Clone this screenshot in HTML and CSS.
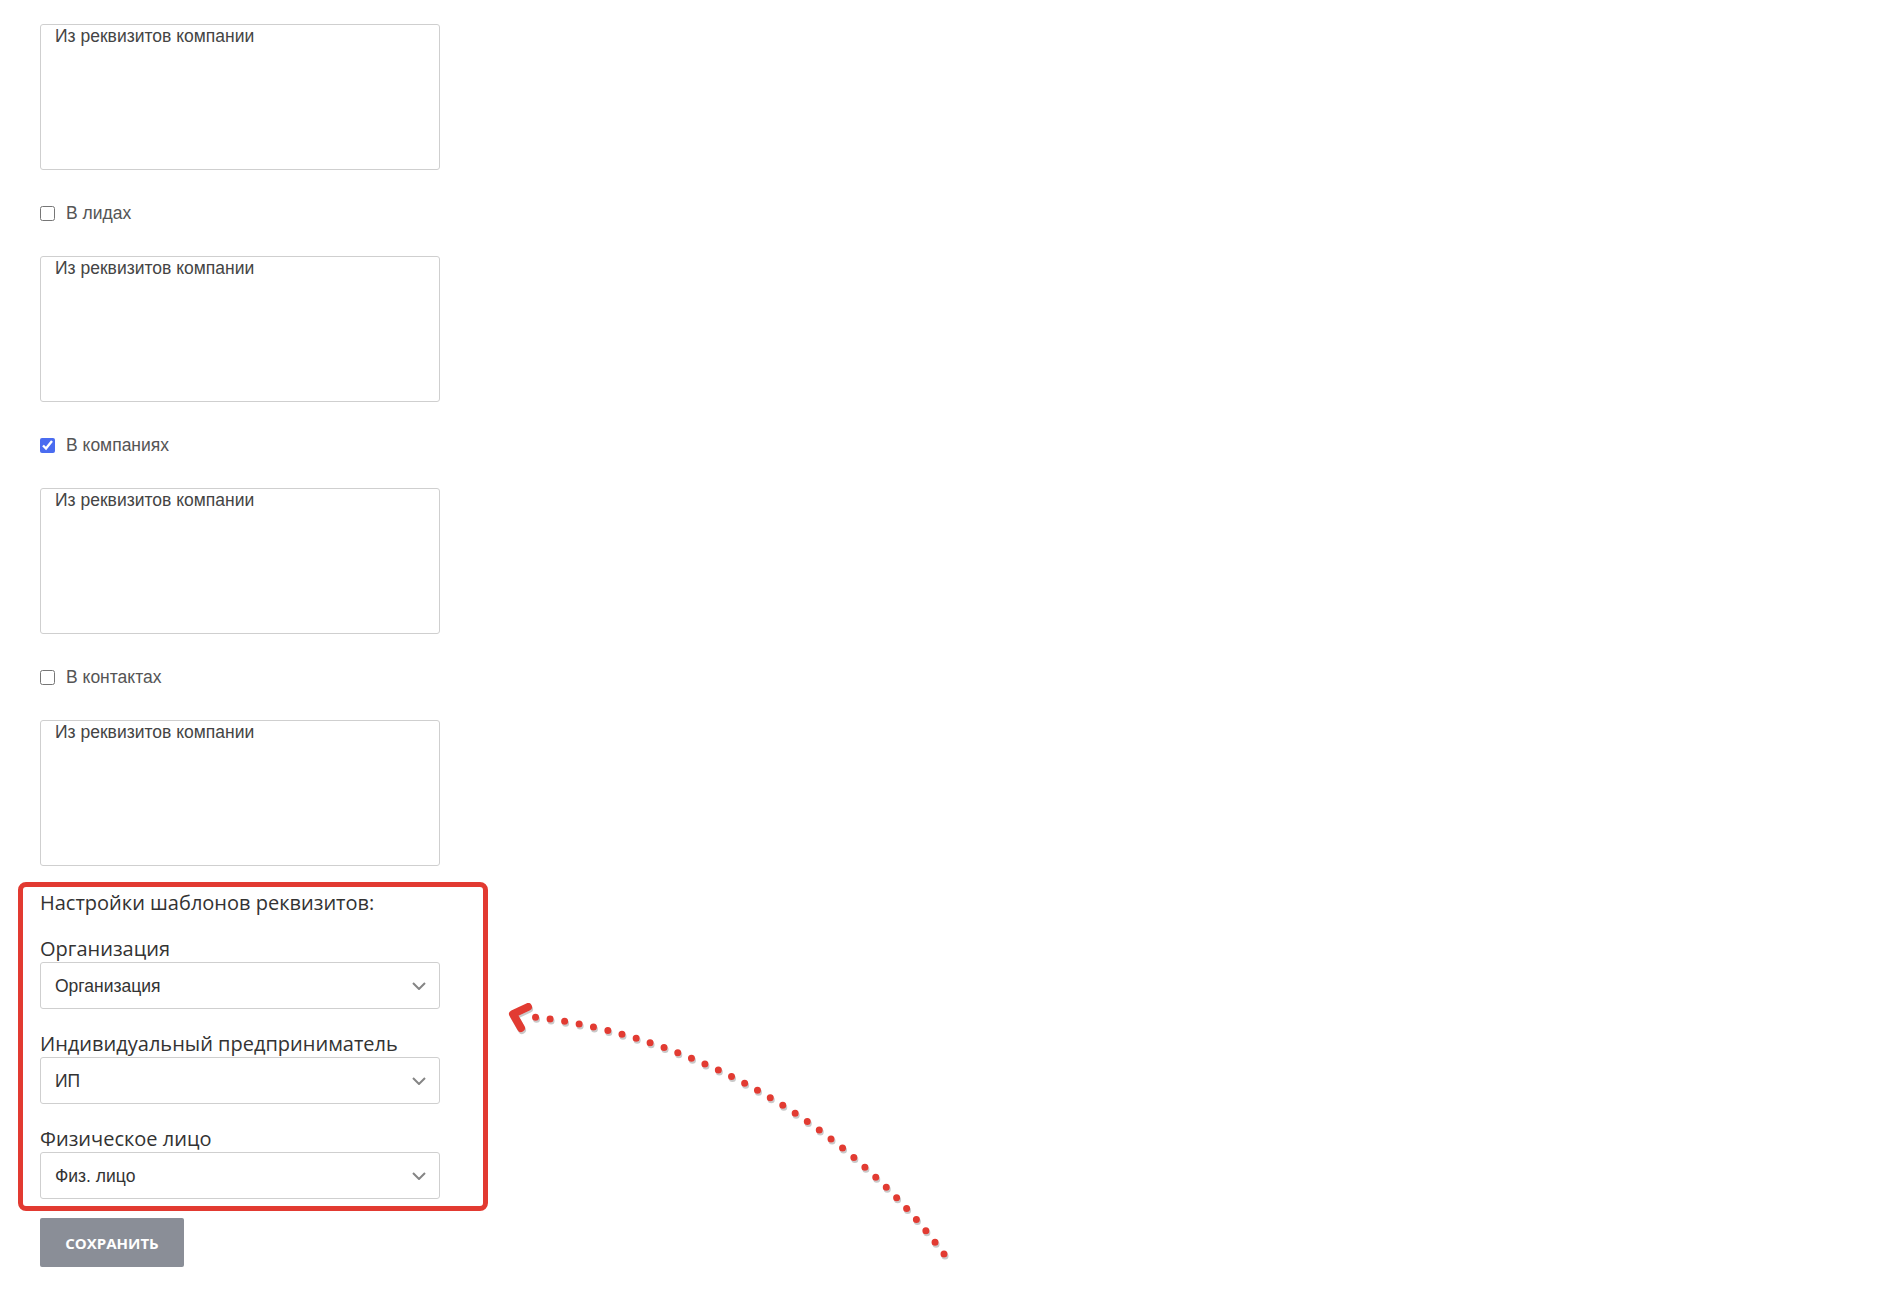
FILE: index.html
```html
<!DOCTYPE html>
<html lang="ru">
<head>
  <meta charset="UTF-8">
  <title>Реквизиты</title>
  <link rel="stylesheet" href="styles.css">
</head>
<body>

  <div class="settings">
    <textarea class="note">Из реквизитов компании</textarea>

    <label class="check-row">
      <input type="checkbox">
      <span>В лидах</span>
    </label>
    <textarea class="note">Из реквизитов компании</textarea>

    <label class="check-row">
      <input type="checkbox" checked>
      <span>В компаниях</span>
    </label>
    <textarea class="note">Из реквизитов компании</textarea>

    <label class="check-row">
      <input type="checkbox">
      <span>В контактах</span>
    </label>
    <textarea class="note">Из реквизитов компании</textarea>

    <div class="templates">
      <h3>Настройки шаблонов реквизитов:</h3>

      <div class="field-label">Организация</div>
      <div class="select-wrap">
        <select>
          <option>Организация</option>
        </select>
        <svg class="chevron" width="14" height="8" viewBox="0 0 14 8"><path d="M1 1 L7 7 L13 1" fill="none" stroke="#858585" stroke-width="2"/></svg>
      </div>

      <div class="field-label">Индивидуальный предприниматель</div>
      <div class="select-wrap">
        <select>
          <option>ИП</option>
        </select>
        <svg class="chevron" width="14" height="8" viewBox="0 0 14 8"><path d="M1 1 L7 7 L13 1" fill="none" stroke="#858585" stroke-width="2"/></svg>
      </div>

      <div class="field-label">Физическое лицо</div>
      <div class="select-wrap">
        <select>
          <option>Физ. лицо</option>
        </select>
        <svg class="chevron" width="14" height="8" viewBox="0 0 14 8"><path d="M1 1 L7 7 L13 1" fill="none" stroke="#858585" stroke-width="2"/></svg>
      </div>
    </div>

    <button class="save-btn">Сохранить</button>
  </div>

  <!-- pointer drawn over the page -->
  <svg class="pointer" width="1884" height="1302" viewBox="0 0 1884 1302">
    <defs>
      <filter id="soft" x="-10%" y="-10%" width="120%" height="120%">
        <feDropShadow dx="1" dy="2" stdDeviation="0.6" flood-color="#888" flood-opacity="0.45"/>
      </filter>
    </defs>
    <g filter="url(#soft)" stroke="#e23a31" fill="none" stroke-linecap="round" stroke-linejoin="round">
      <path d="M944 1254 C 830 1100, 660 1030, 533 1017" stroke-width="7" stroke-dasharray="0 14.7"/>
      <path d="M528 1007 L 513 1014 L 521 1028" stroke-width="8"/>
    </g>
  </svg>

</body>
</html>
```

FILE: styles.css
```css
body {
  margin: 0;
  padding: 0;
  background: #fff;
  font-family: "Liberation Sans", Arial, sans-serif;
  color: #444;
}

.settings {
  display: flex;
  flex-direction: column;
  align-items: flex-start;
  padding: 24px 0 40px 40px;
}

.note {
  display: block;
  box-sizing: border-box;
  width: 400px;
  height: 146px;
  margin: 0;
  padding: 1px 14px;
  border: 1px solid #cfcfcf;
  border-radius: 3px;
  resize: none;
  font-family: "Liberation Sans", Arial, sans-serif;
  font-size: 17.5px;
  line-height: 20px;
  color: #444;
}

.check-row {
  display: flex;
  align-items: center;
  gap: 11px;
  height: 15px;
  margin: 36px 0 35px;
  font-size: 17.5px;
  color: #555;
  cursor: pointer;
}

.check-row input {
  width: 15px;
  height: 15px;
  margin: 0;
  accent-color: #4a6cf0;
}

.templates {
  box-sizing: border-box;
  width: 470px;
  margin: 16px 0 0 -22px;
  padding: 4px 0 7px 17px;
  border: 5px solid #e23a31;
  border-radius: 8px;
  font-family: "Open Sans", sans-serif;
  color: #333;
}

.templates h3 {
  margin: 0 0 22px;
  font-size: 20px;
  font-weight: 400;
  line-height: 24px;
}

.field-label {
  font-size: 20px;
  line-height: 24px;
  margin-bottom: 1px;
}

.select-wrap {
  position: relative;
  width: 400px;
  margin-bottom: 23px;
}

.select-wrap:last-child {
  margin-bottom: 0;
}

.select-wrap select {
  display: block;
  box-sizing: border-box;
  width: 100%;
  height: 47px;
  padding: 0 40px 0 14px;
  border: 1px solid #cfcfcf;
  border-radius: 3px;
  background: #fff;
  appearance: none;
  font-family: "Liberation Sans", Arial, sans-serif;
  font-size: 17.5px;
  color: #333;
}

.chevron {
  position: absolute;
  right: 14px;
  top: 20px;
  pointer-events: none;
}

.save-btn {
  margin-top: 7px;
  width: 144px;
  height: 49px;
  border: none;
  border-radius: 2px;
  background: #8a8e97;
  color: #fff;
  font-family: "Open Sans", sans-serif;
  font-size: 15px;
  font-weight: 700;
  text-transform: uppercase;
  cursor: pointer;
}

.pointer {
  position: absolute;
  left: 0;
  top: 0;
  pointer-events: none;
}
```
